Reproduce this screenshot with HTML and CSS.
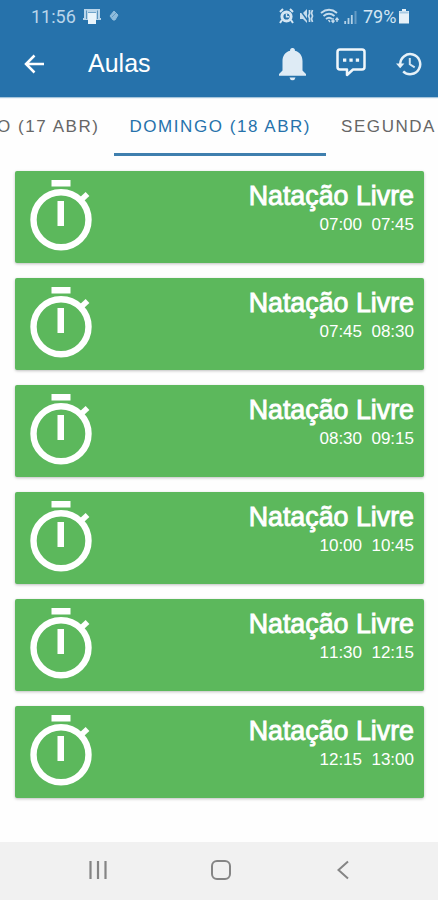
FILE: index.html
```html
<!DOCTYPE html>
<html lang="pt">
<head>
  <meta charset="UTF-8" />
  <meta name="viewport" content="width=device-width, initial-scale=1.0" />
  <title>Aulas</title>
  <link rel="stylesheet" href="styles.css">
</head>
<body>
  <svg class="sprite">
    <symbol id="stopwatch" viewBox="0 0 62 72">
      <path d="M21.500 0h19v6.500h-19zM27.500 21h6.500v25h-6.500z" fill="#fff" />
      <circle cx="31" cy="39.700" r="27.500" fill="none" stroke="#fff" stroke-width="6.400" />
      <path d="M50.500 20.500l7-6.500" stroke="#fff" stroke-width="5.500" />
    </symbol>
  </svg>

  <header>
    <div class="status-bar">
      <span class="clock">11:56</span>
      <svg class="status-app" width="18" height="17" viewBox="0 0 18 17">
        <path d="M1 1h16v9h1v2h-5V4.500H5V12H0v-2h1z" fill="#b9d5ea" />
        <path d="M5 5h8v11H5z" fill="#e9f4fb" />
        <path d="M3.500 2.500V11M14.500 2.500V11" stroke="#5b95bf" stroke-width="1" />
      </svg>
      <svg class="status-dot" width="10" height="12" viewBox="0 0 10 12">
        <path d="M5 1l4 4-3 5H4L1 6z" fill="#8dbbdc" stroke="#8dbbdc" stroke-linejoin="round" />
        <path d="M3 7l4-4" stroke="#6299c2" />
      </svg>
      <svg class="status-alarm" width="15" height="16" viewBox="0 0 15 16">
        <circle cx="7.500" cy="8.500" r="4.600" fill="none" stroke="#d4e6f3" stroke-width="3" />
        <path d="M1 4l3-3M14 4l-3-3M3 12l-2 3M12 12l2 3" stroke="#d4e6f3" stroke-width="2" />
        <path d="M7.500 5.500v3.300H10" fill="none" stroke="#d4e6f3" stroke-width="1.400" />
      </svg>
      <svg class="status-mute" width="15" height="16" viewBox="0 0 15 16">
        <path d="M1 5h3l4-4v14l-4-4H1z" fill="#c5dced" />
        <path d="M1 2l8 11" stroke="#2672ab" stroke-width="1.300" />
        <path d="M10.500 2v4l-1 2 1 2v4M13.500 2l-1 3 1 3-1 3 1 3" fill="none" stroke="#c5dced" stroke-width="1.700" />
      </svg>
      <svg class="status-wifi" width="19" height="16" viewBox="0 0 19 16">
        <path d="M1 5q8-6.500 16 0M3.500 8q5.500-4.500 11 0M6 11q3-2.500 6 0" fill="none" stroke="#c5dced" stroke-width="1.900" />
        <path d="M13 10v4m-1.500-1.500l1.500 2 1.500-2M17 14v-4m-1.500 2l1.500-2 1.500 2M8.500 12l1.500 2" fill="none" stroke="#c5dced" stroke-width="1.300" />
      </svg>
      <svg class="status-signal" width="14" height="15" viewBox="0 0 14 15">
        <path d="M1.200 12v3M4.500 9v6M7.800 6v9" stroke="#b4d2e7" stroke-width="1.800" />
        <path d="M11.500 2v13" stroke="#649bc4" stroke-width="2" />
      </svg>
      <span class="battery-level">79%</span>
      <svg class="status-battery" width="10" height="15" viewBox="0 0 10 15">
        <path d="M0 2h3V0h4v2h3v12.500H0z" fill="#e6f1f8" />
        <path d="M.5 2.500h9v2h-9z" fill="#a9cbe4" />
      </svg>
    </div>
    <div class="toolbar">
      <svg class="back" width="20" height="20" viewBox="0 0 20 20">
        <path d="M20 10H2M10.500 1.500L2 10l8.500 8.500" fill="none" stroke="#fff" stroke-width="2.500" />
      </svg>
      <h1>Aulas</h1>
      <svg class="bell" width="27" height="33" viewBox="0 0 27 33">
        <path d="M13.500 0a2.300 2.300 0 0 1 2.400 2.700C21 4 23.500 8 23.500 13v9.500l3.500 3.500v1.800H0V26l3.500-3.500V13C3.500 8 6 4 11.100 2.700A2.300 2.300 0 0 1 13.500 0zM10.500 29.500h6q-.5 2.700-3 2.700t-3-2.700z" fill="#deebf5" />
      </svg>
      <svg class="chat" width="30" height="30" viewBox="0 0 30 30">
        <path d="M4 1.500h22q2.500 0 2.500 2.500v15q0 2.500-2.500 2.500H17L11 27v-5.500H4q-2.500 0-2.500-2.500V4Q1.500 1.500 4 1.500z" fill="none" stroke="#f1f7fb" stroke-width="2.500" stroke-linejoin="round" />
        <path d="M7 10.500h3.300v3.300H7zM13.400 10.500h3.300v3.300h-3.300zM19.800 10.500h3.300v3.300h-3.300z" fill="#f1f7fb" />
      </svg>
      <svg class="recent" width="26" height="24" viewBox="0 0 26 24">
        <path d="M4.200 12a10 10 0 1 1 3 7.300" fill="none" stroke="#e6f1f8" stroke-width="2.500" />
        <path d="M0 11.500h8.400l-4.200 4.700z" fill="#e6f1f8" />
        <path d="M13.800 6v6.300l4.900 3" fill="none" stroke="#d4e6f3" stroke-width="2" />
      </svg>
    </div>
  </header>

  <nav class="tabs">
    <a class="tab">SÁBADO (17 ABR)</a>
    <a class="tab active">DOMINGO (18 ABR)</a>
    <a class="tab">SEGUNDA</a>
  </nav>

  <main class="classes">
    <div class="class-card">
      <svg class="timer"><use href="#stopwatch" /></svg>
      <div class="info">
        <h2>Natação Livre</h2>
        <p>07:00&nbsp; 07:45</p>
      </div>
    </div>
    <div class="class-card">
      <svg class="timer"><use href="#stopwatch" /></svg>
      <div class="info">
        <h2>Natação Livre</h2>
        <p>07:45&nbsp; 08:30</p>
      </div>
    </div>
    <div class="class-card">
      <svg class="timer"><use href="#stopwatch" /></svg>
      <div class="info">
        <h2>Natação Livre</h2>
        <p>08:30&nbsp; 09:15</p>
      </div>
    </div>
    <div class="class-card">
      <svg class="timer"><use href="#stopwatch" /></svg>
      <div class="info">
        <h2>Natação Livre</h2>
        <p>10:00&nbsp; 10:45</p>
      </div>
    </div>
    <div class="class-card">
      <svg class="timer"><use href="#stopwatch" /></svg>
      <div class="info">
        <h2>Natação Livre</h2>
        <p>11:30&nbsp; 12:15</p>
      </div>
    </div>
    <div class="class-card">
      <svg class="timer"><use href="#stopwatch" /></svg>
      <div class="info">
        <h2>Natação Livre</h2>
        <p>12:15&nbsp; 13:00</p>
      </div>
    </div>
  </main>

  <footer class="nav-bar">
    <svg width="20" height="20" viewBox="0 0 20 20">
      <path d="M2.500 1v18M10 1v18M17.500 1v18" stroke="#858585" stroke-width="2.200" />
    </svg>
    <svg width="20" height="20" viewBox="0 0 20 20">
      <rect x="1" y="1" width="18" height="18" rx="5" fill="none" stroke="#858585" stroke-width="2" />
    </svg>
    <svg width="20" height="20" viewBox="0 0 20 20">
      <path d="M15 1.500L5.500 10l9.500 8.500" fill="none" stroke="#858585" stroke-width="2" />
    </svg>
  </footer>
</body>
</html>
```
FILE: styles.css
```css
* { box-sizing: border-box; }
body {
  font-family: 'Liberation Sans', Arial, sans-serif;
  margin: 0; background: #fefefe;
  height: 900px; overflow: hidden;
  display: flex; flex-direction: column;
}
svg { display: block; flex-shrink: 0; }
h1, h2, p { margin: 0; font-weight: normal; }
.sprite { display: none; }

header {
  height: 97px; flex-shrink: 0;
  background: #2672ab;
  box-shadow: 0 1px 1px rgba(38,114,171,0.4);
  color: #fff;
}
.status-bar {
  height: 32px;
  display: flex; align-items: center;
  padding: 0 29px 0 31px;
  font-family: Roboto, sans-serif;
  font-size: 18px;
}
.clock { color: #b9d5ea; width: 46px; }
.status-app { margin-left: 6px; }
.status-dot { margin-left: 8px; }
.status-alarm { margin-left: auto; }
.status-mute { margin-left: 5px; }
.status-wifi { margin-left: 6px; }
.status-signal { margin-left: 5px; }
.battery-level { color: #d4e6f3; margin-left: 5px; width: 34px; }
.status-battery { margin-left: 2px; }

.toolbar {
  height: 64px;
  display: flex; align-items: center;
  padding: 0 16px 0 24px;
}
.toolbar h1 {
  font-size: 25px; line-height: 28px;
  margin: -2px auto 0 44px;
}
.bell { margin-right: 30px; }
.chat { margin: -2px 30px 0 0; }

.tabs {
  height: 59px; flex-shrink: 0;
  display: flex; justify-content: flex-end;
  margin-right: -13px;
}
.tab {
  flex-shrink: 0;
  padding: 0 15px;
  font-size: 17px; line-height: 59px;
  letter-spacing: 1.55px;
  color: #666;
}
.tab.active {
  color: #2672ab;
  border-bottom: 3px solid #3f7fae;
}

.classes {
  flex: 1;
  display: flex; flex-direction: column;
  gap: 15px;
  padding: 15px 14px 0 15px;
}
.class-card {
  height: 92px;
  display: flex; justify-content: space-between;
  padding: 9px 10px 0 15px;
  background: #5cb85c;
  border-radius: 2px;
  box-shadow: 0 1px 3px rgba(0,0,0,0.25);
  color: #fff;
}
.timer { width: 62px; height: 72px; }
.info { text-align: right; }
.info h2 {
  font-size: 26.8px; line-height: 33px;
  -webkit-text-stroke: 0.9px #fff;
}
.info p { font-size: 17px; line-height: 24px; font-kerning: none; }

.nav-bar {
  height: 58px; flex-shrink: 0;
  display: flex; justify-content: space-between; align-items: center;
  padding: 0 85px 2px 88px;
  background: #f1f1f1;
}
```
